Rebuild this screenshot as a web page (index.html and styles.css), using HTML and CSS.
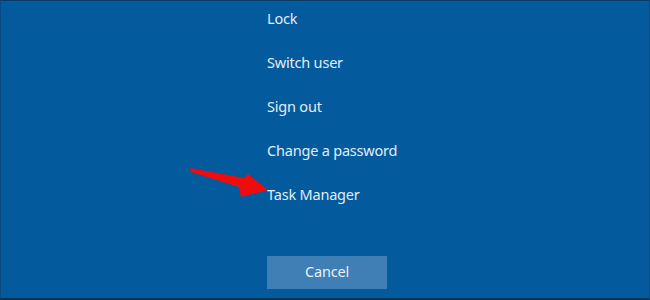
FILE: index.html
```html
<!DOCTYPE html>
<html>
<head>
<meta charset="utf-8">
<link rel="stylesheet" href="styles.css">
</head>
<body>
<div class="screen">
  <ul class="menu">
    <li class="item">Lock</li>
    <li class="item">Switch user</li>
    <li class="item">Sign out</li>
    <li class="item">Change a password</li>
    <li class="item target">Task Manager
      <svg class="arrow" width="80" height="34" viewBox="0 0 80 34">
        <polygon points="0,2 54,12 58,8 78,24 51,31 49,21 1,6" fill="#f00c0c"/>
      </svg>
    </li>
  </ul>
  <button class="cancel">Cancel</button>
</div>
</body>
</html>
```
FILE: styles.css
```css
html, body {
  margin: 0;
  padding: 0;
}
.screen {
  width: 650px;
  height: 300px;
  box-sizing: border-box;
  background: #035a9d;
  border-top: 1px solid #0b3a66;
  border-left: 1px solid #0b4a80;
  border-right: 1px solid #0b4a80;
  border-bottom: 2px solid #0b3355;
  padding-left: 266px;
  display: flex;
  flex-direction: column;
  font-family: "Noto Sans", "Open Sans", sans-serif;
  color: #e4edf6;
}
.menu {
  list-style: none;
  margin: 0;
  padding: 0;
  display: flex;
  flex-direction: column;
}
.item {
  height: 44px;
  line-height: 35px;
  font-size: 14.5px;
  letter-spacing: -0.2px;
  position: relative;
}
.arrow {
  position: absolute;
  left: -77px;
  top: -11px;
}
.cancel {
  margin-top: 35px;
  width: 120px;
  height: 33px;
  border: none;
  background: #3f7fb6;
  color: #e8f0f8;
  font-family: "Noto Sans", "Open Sans", sans-serif;
  font-size: 14.5px;
  letter-spacing: -0.2px;
  line-height: 31px;
  padding: 0 0 2px;
}
```
